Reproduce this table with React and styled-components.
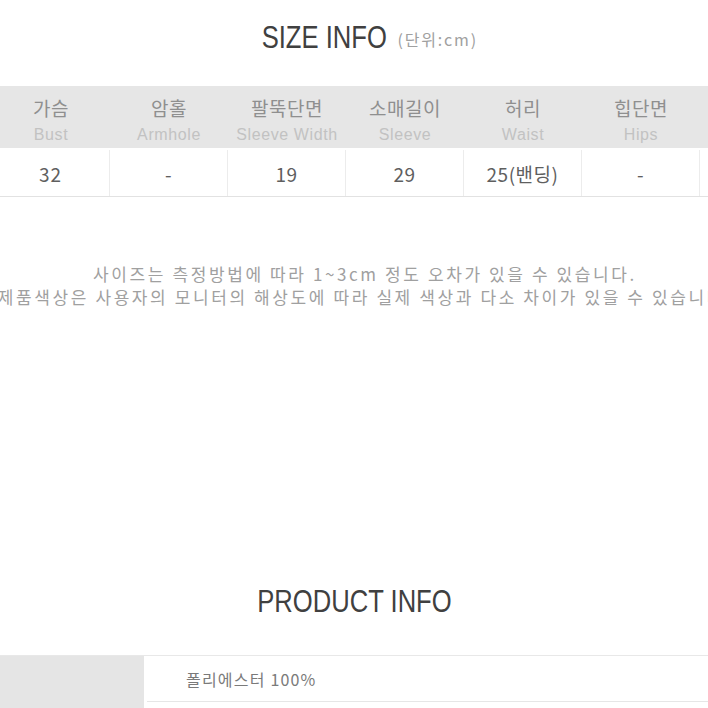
import styled, { createGlobalStyle } from "styled-components";

const GlobalStyle = createGlobalStyle`
  html, body {
    margin: 0;
    padding: 0;
    background: #fff;
    overflow: hidden;
  }
  body {
    font-family: "Noto Sans CJK KR", "Noto Sans", sans-serif;
  }
`;

const sizeColumns = [
  { ko: "가슴", en: "Bust", value: "32" },
  { ko: "암홀", en: "Armhole", value: "-" },
  { ko: "팔뚝단면", en: "Sleeve Width", value: "19" },
  { ko: "소매길이", en: "Sleeve", value: "29" },
  { ko: "허리", en: "Waist", value: "25(밴딩)" },
  { ko: "힙단면", en: "Hips", value: "-" },
  { ko: "", en: "", value: "" },
];

const notices = [
  "사이즈는 측정방법에 따라 1~3cm 정도 오차가 있을 수 있습니다.",
  "제품색상은 사용자의 모니터의 해상도에 따라 실제 색상과 다소 차이가 있을 수 있습니다.",
];

const App = () => {
  return (
    <Page>
      <GlobalStyle />
      <TitleRow $top={21} $shift={32}>
        <Title $squeeze={16}>SIZE INFO</Title>
        <Unit>(단위:cm)</Unit>
      </TitleRow>

      <SizeTable>
        <HeadRow>
          {sizeColumns.map(({ ko, en }, i) => (
            <HeadCell key={i}>
              <Ko>{ko}</Ko>
              <En>{en}</En>
            </HeadCell>
          ))}
        </HeadRow>
        <ValueRow>
          {sizeColumns.map(({ value }, i) => (
            <ValueCell key={i}>{value}</ValueCell>
          ))}
        </ValueRow>
      </SizeTable>

      <Notice>
        {notices.map((line) => (
          <NoticeLine key={line}>{line}</NoticeLine>
        ))}
      </Notice>

      <TitleRow $top={277} $shift={0}>
        <Title $squeeze={25}>PRODUCT INFO</Title>
      </TitleRow>

      <ProductTable>
        <ProductRow>
          <ProductLabel />
          <ProductValue>폴리에스터 100%</ProductValue>
        </ProductRow>
        <ProductRow>
          <ProductLabel />
          <ProductValue />
        </ProductRow>
      </ProductTable>
    </Page>
  );
};

const Page = styled.div`
  width: 724px;
  margin-left: -8px;
  height: 708px;
  overflow: hidden;
`;

const TitleRow = styled.div`
  display: flex;
  justify-content: center;
  align-items: center;
  gap: 11px;
  padding-top: ${(p) => p.$top}px;
  margin-left: ${(p) => p.$shift}px;
  white-space: nowrap;
`;

// no narrow face installed, so squeeze the regular one
const Title = styled.h2`
  margin: 0 -${(p) => p.$squeeze}px;
  font-family: "Liberation Sans", Arial, sans-serif;
  font-weight: 400;
  font-size: 32px;
  line-height: 32px;
  color: #404040;
  transform: scaleX(0.8);
`;

const Unit = styled.span`
  font-size: 16px;
  color: #a0a0a0;
  letter-spacing: 1.8px;
  margin-top: 3px;
`;

const SizeTable = styled.div`
  margin-top: 33px;
  width: 826px;
`;

const HeadRow = styled.div`
  display: grid;
  grid-template-columns: repeat(7, 118px);
  height: 62px;
  background: #e6e6e6;
`;

const HeadCell = styled.div`
  display: flex;
  flex-direction: column;
  align-items: center;
  padding-top: 10px;
`;

const Ko = styled.span`
  font-size: 19px;
  line-height: 24px;
  height: 24px;
  color: #8f8f8f;
  letter-spacing: 0.5px;
`;

const En = styled.span`
  margin-top: 5px;
  font-family: "Liberation Sans", Arial, sans-serif;
  font-size: 16px;
  line-height: 20px;
  color: #c2c2c2;
  letter-spacing: 0.6px;
`;

const ValueRow = styled.div`
  display: grid;
  grid-template-columns: repeat(7, 118px);
  height: 46px;
  margin-top: 2px;
  border-bottom: 1px solid #e2e2e2;
`;

const ValueCell = styled.div`
  display: flex;
  align-items: center;
  justify-content: center;
  border-right: 1px solid #ececec;
  font-size: 19px;
  color: #5f5f5f;
  letter-spacing: 0.5px;

  &:first-child {
    letter-spacing: 1px;
  }
`;

const Notice = styled.div`
  margin-top: 65px;
  display: flex;
  flex-direction: column;
  align-items: center;
  margin-left: 22px;
`;

const NoticeLine = styled.p`
  margin: 0;
  white-space: nowrap;
  font-size: 17px;
  line-height: 23px;
  color: #a0a0a0;
  letter-spacing: 2.6px;
`;

const ProductTable = styled.div`
  margin-top: 38px;
  margin-left: 8px;
  border-top: 1px solid #e8e8e8;
`;

const ProductRow = styled.div`
  display: grid;
  grid-template-columns: 144px 1fr;
  height: 46px;
`;

const ProductLabel = styled.div`
  background: #e5e5e5;
`;

const ProductValue = styled.div`
  display: flex;
  align-items: center;
  padding-left: 39px;
  margin-left: 3px;
  border-bottom: 1px solid #e6e6e6;
  font-size: 16px;
  color: #7a7a7a;
  letter-spacing: 1.2px;
`;

export default App;
